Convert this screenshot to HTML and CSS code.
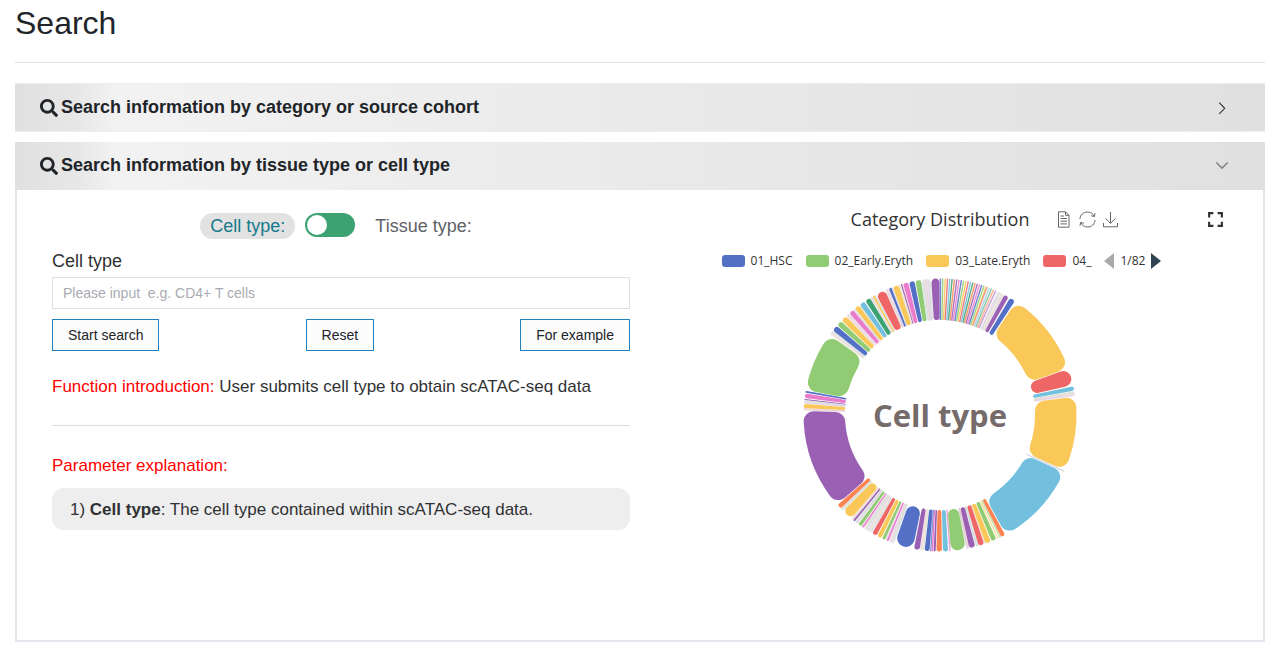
FILE: index.html
```html
<!DOCTYPE html>
<html lang="en">
<head>
<meta charset="utf-8">
<title>Search</title>
<link rel="stylesheet" href="styles.css">
</head>
<body>
<main class="page">
  <h1 class="page-title">Search</h1>

  <section class="panel">
    <button type="button" class="panel-head bordered" aria-expanded="false">
      <svg class="search-icon" viewBox="0 0 512 512" aria-hidden="true"><path d="M505 442.700L405.300 343c-4.500-4.500-10.600-7-17-7H372c27.600-35.300 44-79.700 44-128C416 93.100 322.900 0 208 0S0 93.100 0 208s93.100 208 208 208c48.300 0 92.700-16.400 128-44v16.300c0 6.400 2.500 12.500 7 17l99.700 99.700c9.400 9.400 24.600 9.400 33.900 0l28.300-28.300c9.400-9.400 9.400-24.600.1-34zM208 336c-70.700 0-128-57.200-128-128 0-70.700 57.200-128 128-128 70.700 0 128 57.200 128 128 0 70.700-57.200 128-128 128z"/></svg>
      <span class="panel-title">Search information by category or source cohort</span>
      <svg class="arrow" viewBox="0 0 13 13" aria-hidden="true"><path d="M4 1.500 9 6.800 4 12"/></svg>
    </button>
  </section>

  <section class="panel open">
    <button type="button" class="panel-head" aria-expanded="true">
      <svg class="search-icon" viewBox="0 0 512 512" aria-hidden="true"><path d="M505 442.700L405.300 343c-4.500-4.500-10.600-7-17-7H372c27.600-35.300 44-79.700 44-128C416 93.100 322.900 0 208 0S0 93.100 0 208s93.100 208 208 208c48.300 0 92.700-16.400 128-44v16.300c0 6.400 2.500 12.500 7 17l99.700 99.700c9.400 9.400 24.600 9.400 33.900 0l28.300-28.300c9.400-9.400 9.400-24.600.1-34zM208 336c-70.700 0-128-57.200-128-128 0-70.700 57.200-128 128-128 70.700 0 128 57.200 128 128 0 70.700-57.200 128-128 128z"/></svg>
      <span class="panel-title">Search information by tissue type or cell type</span>
      <svg class="arrow down" viewBox="0 0 13 13" aria-hidden="true"><path d="M1.200 3.200 6.500 8.500 11.800 3.200"/></svg>
    </button>

    <div class="panel-body">
      <form class="search-form">
        <div class="mode-row">
          <label class="mode active" for="mode">Cell type:</label>
          <input class="switch" id="mode" type="checkbox" role="switch">
          <label class="mode" for="mode">Tissue type:</label>
        </div>
        <label class="field-label" for="cell-type">Cell type</label>
        <input class="field" id="cell-type" type="text" placeholder="Please input&nbsp; e.g. CD4+ T cells">
        <div class="actions">
          <button type="button" class="btn">Start search</button>
          <button type="button" class="btn">Reset</button>
          <button type="button" class="btn">For example</button>
        </div>
        <p class="note"><span class="red">Function introduction:</span> User submits cell type to obtain scATAC-seq data</p>
        <hr class="rule">
        <p class="note red">Parameter explanation:</p>
        <p class="param">1) <b>Cell type</b>: The cell type contained within scATAC-seq data.</p>
      </form>

      <div class="chart">
        <div class="chart-head">
          <h2 class="chart-title">Category Distribution</h2>
          <div class="tools">
            <button type="button" class="tool" aria-label="Data view"><svg viewBox="0 0 17 17"><path d="M2.500.8H9.500L13 4.300V16.200H2.500ZM9.500.8V4.300H13M4.500 5H8M4.500 7.500H11M4.500 10.200H11M4.500 12.900H11"/></svg></button>
            <button type="button" class="tool" aria-label="Restore"><svg viewBox="0 0 17 17"><path d="M1 8C1 4 4.400 1 8.500 1C11.500 1 14.200 2.800 15.300 5.400M16 2.200 15.400 5.600 12.200 4.700M16 9C16 13 12.600 16 8.500 16C5.500 16 2.800 14.200 1.700 11.600M1 14.800 1.600 11.400 4.800 12.300"/></svg></button>
            <button type="button" class="tool" aria-label="Save as image"><svg viewBox="0 0 17 17"><path d="M8.500 1V12M3.500 7.400 8.500 12.400 13.500 7.400M1.500 12V15.800H15.500V12"/></svg></button>
          </div>
          <button type="button" class="tool full" aria-label="Full screen"><svg viewBox="0 0 16 16"><path d="M2 6V2H6M10 2H14V6M14 10V14H10M6 14H2V10"/></svg></button>
        </div>
        <div class="legend">
          <span class="item"><i class="swatch blue"></i>01_HSC</span>
          <span class="item"><i class="swatch green"></i>02_Early.Eryth</span>
          <span class="item"><i class="swatch yellow"></i>03_Late.Eryth</span>
          <span class="item"><i class="swatch rose"></i>04_</span>
          <span class="pager">
            <svg class="tri off" viewBox="0 0 10 16"><path d="M10 0V16L0 8Z"/></svg>
            1/82
            <svg class="tri" viewBox="0 0 10 16"><path d="M0 0V16L10 8Z"/></svg>
          </span>
        </div>
        <svg class="donut" id="donut" viewBox="-138 -138 276 276" role="img" aria-label="Cell type distribution">
          <g id="slices"></g>
          <text class="donut-label" x="0" y="12" text-anchor="middle">Cell type</text>
        </svg>
      </div>
    </div>
  </section>
</main>
<script src="chart.js"></script>
</body>
</html>
```
FILE: styles.css
```css
* { box-sizing: border-box; }

body {
  margin: 0;
  font-family: "Liberation Sans", Arial, sans-serif;
  color: #212529;
  background: #fff;
}

.page { padding: 4px 17px 8px 15px; }

.page-title {
  margin: 0 0 20px;
  padding-bottom: 20px;
  border-bottom: 1px solid #dcdfe6;
  font-size: 32px;
  font-weight: 400;
  line-height: 38px;
}

.panel { margin-bottom: 10px; }

.panel-head {
  display: flex;
  align-items: center;
  width: 100%;
  height: 48px;
  padding: 0 36px 2px 25px;
  border: 0;
  background: linear-gradient(90deg, #e0e0e0 0%, #e7e7e7 5%, #f2f2f2 8%, #e0e0e0 100%);
  color: #212529;
  font: bold 18px/24px "Liberation Sans", Arial, sans-serif;
  text-align: left;
}

.panel-head.bordered {
  height: 49px;
  border-top: 1px solid #ebeef5;
  border-bottom: 1px solid #ebeef5;
}

.search-icon { width: 18px; height: 18px; margin: 2px 3px 0 0; fill: #212529; }
.panel-title { flex: 1; }
.arrow { width: 14px; height: 14px; margin-top: 2px; fill: none; stroke: #303133; stroke-width: 1; }
.arrow.down { stroke: #84878c; stroke-width: 1.500; }

.panel-body {
  display: grid;
  grid-template-columns: 1fr 1fr;
  min-height: 452px;
  border: 2px solid #e4e7ed;
  border-top: 0;
}

.search-form { padding: 23px 10px 0 35px; }

.mode-row {
  display: flex;
  justify-content: center;
  gap: 10px;
}

.mode {
  height: 26px;
  padding: 0 10px;
  border-radius: 13px;
  font-size: 18px;
  line-height: 26px;
  color: #606266;
}

.mode.active { background: #e2e2e2; color: #157a8c; }

.switch {
  appearance: none;
  width: 50px;
  height: 24px;
  margin: 0;
  padding: 2px;
  border-radius: 12px;
  background: #3ca272;
}

.switch::before {
  content: "";
  display: block;
  width: 20px;
  height: 20px;
  border-radius: 50%;
  background: #fff;
}

.field-label { display: block; margin: 10px 0 4px; font-size: 18px; line-height: 24px; color: #303133; }

.field {
  display: block;
  width: 100%;
  height: 32px;
  padding: 0 10px;
  border: 1px solid #dcdfe6;
  border-radius: 0;
  font: 14px "Liberation Sans", Arial, sans-serif;
  color: #303133;
}

.field::placeholder { color: #a8abb2; }

.actions { display: flex; justify-content: space-between; margin: 10px 0 24px; }

.btn {
  height: 32px;
  padding: 0 15px;
  border: 1px solid #2080c0;
  background: #fcfcfc;
  color: #212529;
  font: 14px "Liberation Sans", Arial, sans-serif;
}

.note { margin: 0; font-size: 17px; line-height: 24px; color: #303133; }
.red, .note.red { color: #f00; }
.rule { margin: 26px 0 28px; border: 0; border-top: 1px solid #dcdcdc; }

.param {
  margin: 10px 0 0;
  padding: 10px 18px 8px;
  border-radius: 12px;
  background: #eee;
  font-size: 17px;
  line-height: 24px;
  color: #303133;
}

.chart {
  display: flex;
  flex-direction: column;
  align-items: center;
  padding: 16px 23px 0 0;
  font-family: "Open Sans", "Noto Sans", sans-serif;
  color: #333;
}

.chart-head {
  display: grid;
  grid-template-columns: 1fr auto 1fr;
  align-items: center;
  width: 100%;
  padding-right: 16px;
  padding-left: 16px;
}

.chart-title { grid-column: 2; margin: 0; font-size: 18px; font-weight: 400; line-height: 26px; }
.tools { grid-row: 1; grid-column: 3; display: flex; gap: 6px; padding-left: 27px; }
.tool { width: 17px; height: 17px; padding: 0; border: 0; background: none; }
.tool svg { display: block; width: 17px; height: 17px; fill: none; stroke: #666; stroke-width: 1; }
.tool.full { grid-row: 1; grid-column: 3; justify-self: end; }
.tool.full svg { stroke: #303133; stroke-width: 2; }

.legend {
  display: flex;
  align-items: center;
  gap: 13px;
  margin: 19px 0 6px;
  padding-left: 3px;
  font-size: 12px;
  line-height: 20px;
}

.item { display: flex; align-items: center; gap: 6px; }
.swatch { width: 23px; height: 12px; border-radius: 3px; }
.blue { background: #5470c6; }
.green { background: #91cc75; }
.yellow { background: #fac858; }
.rose { background: #ee6666; }
.pager { display: flex; align-items: center; gap: 6px; }
.tri { width: 10px; height: 16px; fill: #2f4554; }
.tri.off { fill: #aaa; }

.donut { width: 276px; height: 276px; }
.donut-label { font: bold 31px "Open Sans", "Noto Sans", sans-serif; fill: #766b6b; }
```
FILE: chart.js
```js
const OUTER = 136.5, INNER = 95, CORNER = 10;
const palette = {
  b: '#5470c6', g: '#91cc75', y: '#fac858', r: '#ee6666', l: '#73c0de',
  d: '#3ba272', o: '#fc8452', p: '#9a60b4', k: '#ea7ccc'
};
const order = 'bgyrldopk';

// [start, end, colour]: degrees clockwise from the top
const slices = [
  [28.2,30.2,'p'],[30.9,33.3,'b'],[33.9,69.9,'y'],[70.2,77.3,'r'],[77.8,79.7,'l'],
  [82.2,113.8,'y'],[114.9,151.1,'l'],[151.5,153.4,'o'],[155.6,157.7,'g'],
  [158.1,160.5,'y'],[161.1,163.5,'r'],[165,167.6,'p'],[169,175.4,'g'],
  [176.6,178.8,'l'],[179.2,181.5,'o'],[181.8,182.7,'p'],[182.9,183.6,'k'],
  [184.4,186.5,'b'],[188.6,191,'p'],[191.5,199.4,'b'],[202.2,203,'k'],
  [203.8,205.1,'g'],[205.5,207.4,'y'],[207.8,209.8,'r'],[214.2,214.9,'k'],
  [215.3,216.8,'g'],[218.7,219.5,'p'],[220.7,225.3,'y'],[226.7,228.7,'o'],
  [229,271.7,'p'],[272.9,274.7,'y'],[276.3,276.8,'p'],[277.2,279.1,'k'],
  [279.4,280.2,'b'],[280.5,306,'g'],[308.3,310.8,'b'],[311.2,313.5,'g'],
  [313.9,316.4,'y'],[318.3,320.4,'k'],[321.4,323.5,'y'],[324,326.3,'l'],
  [326.8,329.1,'d'],[330.4,331.2,'y'],[332.1,336.2,'r'],[338,339.1,'b'],
  [339.8,342.3,'y'],[343.3,343.8,'p'],[344.3,346.5,'k'],[346.9,349.2,'b'],
  [349.6,352,'g'],[356.3,359.8,'p']
];

// [start, end, opacity]: runs of categories with very few cells
const runs = [
  [0,20,.85],[20,25,.6],[25,28.1,.25],[80,82,.25],[114.1,114.7,.35],
  [153.6,155.500,.6],[160.6,161,.25],[163.6,164.9,.3],[167.7,168.9,.4],
  [175.600,176.5,.7],[183.700,184.3,.7],[186.7,188.5,.25],[199.7,202.1,.25],
  [203.1,203.7,.3],[210,214.1,.25],[217,218.6,.3],[219.600,220.6,.3],
  [225.4,226.6,.35],[271.9,272.8,.3],[274.8,276.2,.25],[306.3,308.2,.25],
  [316.6,318.2,.25],[320.5,321.3,.25],[323.600,323.9,.3],[329.3,330.3,.25],
  [331.3,332,.3],[336.4,337.9,.25],[339.2,339.7,.25],[342.4,343.2,.25],
  [343.9,344.2,.3],[352.2,356.2,.25]
];

const rad = d => d * Math.PI / 180;
const at = (radius, angle) =>
  (radius * Math.sin(angle)).toFixed(2) + ' ' + (-radius * Math.cos(angle)).toFixed(2);

function sector(start, end) {
  const a = rad(start), b = rad(end), s = Math.sin(Math.min((b - a) / 2, Math.PI / 2));
  const co = Math.min(CORNER, OUTER * s / (1 + s));
  const ci = Math.min(CORNER, s < 0.5 ? INNER * s / (1 - s) : CORNER);
  const ao = Math.asin(co / (OUTER - co)), ai = Math.asin(ci / (INNER + ci));
  const ro = (OUTER - co) * Math.cos(ao), ri = (INNER + ci) * Math.cos(ai);
  return `M${at(ri, a)}L${at(ro, a)}A${co} ${co} 0 0 1 ${at(OUTER, a + ao)}` +
    `A${OUTER} ${OUTER} 0 0 1 ${at(OUTER, b - ao)}A${co} ${co} 0 0 1 ${at(ro, b)}` +
    `L${at(ri, b)}A${ci} ${ci} 0 0 1 ${at(INNER, b - ai)}` +
    `A${INNER} ${INNER} 0 0 0 ${at(INNER, a + ai)}A${ci} ${ci} 0 0 1 ${at(ri, a)}Z`;
}

const group = document.getElementById('slices');
function add(d, attributes) {
  const path = document.createElementNS('http://www.w3.org/2000/svg', 'path');
  path.setAttribute('d', d);
  for (const name in attributes) path.setAttribute(name, attributes[name]);
  group.appendChild(path);
}

let next = 0;
for (const [start, end, opacity] of runs) {
  if (opacity < .5) add(sector(start, end), { fill: '#efecee' });
  const step = opacity > .5 ? .98 : .55;
  for (let angle = start + .2; angle < end; angle += step) {
    add(`M${at(INNER, rad(angle))}L${at(OUTER, rad(angle))}`,
      { stroke: palette[order[next++ % 9]], 'stroke-width': opacity > .5 ? 1.4 : .6, opacity });
  }
}
for (const [start, end, colour] of slices) add(sector(start, end), { fill: palette[colour] });
```
